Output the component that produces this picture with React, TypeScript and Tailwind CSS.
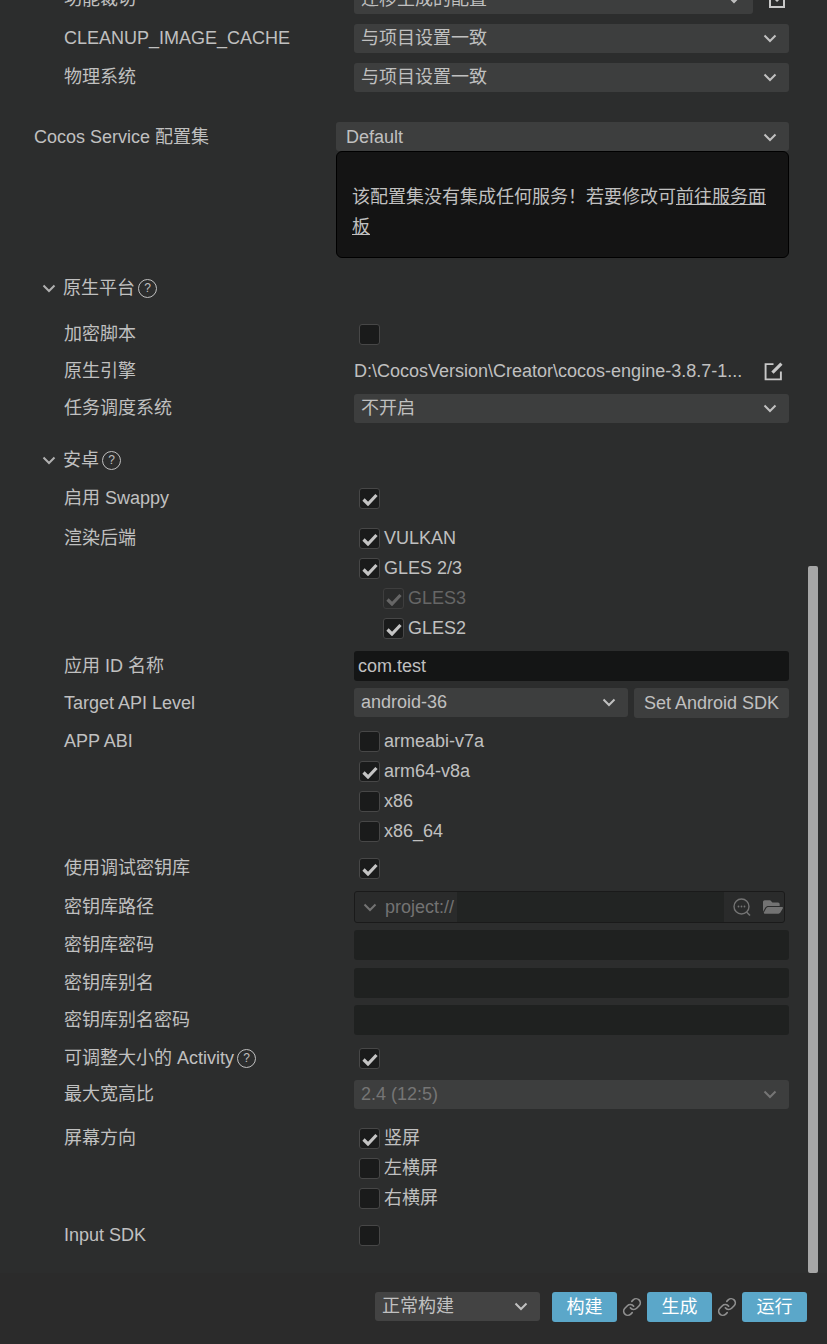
import { FaFolderOpen } from "react-icons/fa";
import { Link } from "lucide-react";
import type { ReactNode } from "react";

function Chevron({ className = "" }: { className?: string }) {
  return (
    <svg width="14" height="9" viewBox="0 0 14 9" fill="none" className={className}>
      <path d="M1.5 1.5L7 7l5.5-5.5" stroke="currentColor" strokeWidth="2" />
    </svg>
  );
}

function Help() {
  return (
    <span className="ml-[3px] flex h-[19px] w-[19px] items-center justify-center rounded-full border border-[#c0c0c0] text-[12px] leading-none">
      ?
    </span>
  );
}

function Check({ checked = false, disabled = false }: { checked?: boolean; disabled?: boolean }) {
  return (
    <span
      className={`flex h-[21px] w-[21px] shrink-0 items-center justify-center rounded-[3px] border bg-[#1a1b1b] ${
        disabled ? "border-[#3e3e3e] bg-[#2a2b2b] text-[#666]" : "border-[#474747] text-[#c4c4c4]"
      }`}
    >
      {checked && (
        <svg width="16" height="14" viewBox="0 0 16 14" fill="none" className="mt-[1px]">
          <path d="M1.5 7.5L6 12l8.5-9" stroke="currentColor" strokeWidth="3.2" />
        </svg>
      )}
    </span>
  );
}

function Select({ value, disabled = false, className = "" }: { value: string; disabled?: boolean; className?: string }) {
  return (
    <div
      className={`flex h-[29px] items-center justify-between rounded-[3px] bg-[#3d3e3e] pr-[12px] ${
        disabled ? "text-[#757575]" : "text-[#c0c0c0]"
      } ${className}`}
    >
      <span className="pl-[7px]">{value}</span>
      <Chevron />
    </div>
  );
}

function Row({ label, mt, children, start = false }: { label: ReactNode; mt: string; children?: ReactNode; start?: boolean }) {
  return (
    <div className={`flex pl-[64px] pr-[38px] ${mt} ${start ? "items-start" : "items-center"}`}>
      <div className={`flex w-[290px] shrink-0 items-center ${start ? "h-[30px]" : ""}`}>{label}</div>
      <div className="min-w-0 flex-1">{children}</div>
    </div>
  );
}

function CheckRow({ label, checked, disabled, indent }: { label: string; checked?: boolean; disabled?: boolean; indent?: boolean }) {
  return (
    <div className={`flex h-[30px] items-center gap-[4px] ${indent ? "pl-[29px]" : "pl-[5px]"} ${disabled ? "text-[#666]" : ""}`}>
      <Check checked={checked} disabled={disabled} />
      <span>{label}</span>
    </div>
  );
}

function Input({ mt, label, value }: { mt: string; label: string; value?: string }) {
  return (
    <Row label={label} mt={mt}>
      <div className={`flex h-[30px] items-center rounded-[3px] pl-[4px] ${value ? "bg-[#141515]" : "bg-[#1f2120]"}`}>{value}</div>
    </Row>
  );
}

function SectionHead({ label, mt }: { label: string; mt: string }) {
  return (
    <div className={`flex h-[30px] items-center pl-[42px] ${mt}`}>
      <Chevron className="mr-[7px] text-[#b0b0b0]" />
      <span>{label}</span>
      <Help />
    </div>
  );
}

function ActionButton({ label }: { label: string }) {
  return (
    <button className="h-[30px] w-[65px] rounded-[3px] bg-[#5ba7c9] text-white">{label}</button>
  );
}

export default function App() {
  return (
    <div
      className="flex h-screen flex-col overflow-hidden bg-[#2c2d2d] text-[18px] text-[#c0c0c0]"
      style={{ fontFamily: '"Liberation Sans", "Noto Sans CJK SC", sans-serif' }}
    >
      <div className="relative flex-1 overflow-hidden">
        <div className="absolute right-[9px] top-[566px] h-[707px] w-[10px] rounded-[2px] bg-[#a6a6a6]" />

        <div className="-mt-[15px] flex items-center pl-[64px] pr-[38px]">
          <div className="w-[290px] shrink-0">功能裁切</div>
          <Select value="迁移生成的配置" className="flex-1" />
          <svg width="18" height="18" viewBox="0 0 18 18" fill="none" className="ml-[15px] mr-[3px] text-[#c8c8c8]">
            <path d="M9 2H2v14h14V9" stroke="currentColor" strokeWidth="2" />
            <path d="M8 10l8-8" stroke="currentColor" strokeWidth="3" />
          </svg>
        </div>
        <Row label="CLEANUP_IMAGE_CACHE" mt="mt-[10px]">
          <Select value="与项目设置一致" />
        </Row>
        <Row label="物理系统" mt="mt-[10px]">
          <Select value="与项目设置一致" />
        </Row>

        <div className="mt-[30px] flex pl-[34px] pr-[38px]">
          <div className="flex h-[29px] w-[302px] shrink-0 items-center pt-[2px]">Cocos Service 配置集</div>
          <div className="min-w-0 flex-1">
            <Select value="Default" className="pt-[1px] [&>span]:pl-[10px]" />
            <div className="flex h-[107px] flex-col justify-center rounded-[6px] border border-black bg-[#141414] px-[15px] pt-[15px] leading-[30px]">
              <p>
                该配置集没有集成任何服务！若要修改可<span className="underline">前往服务面板</span>
              </p>
            </div>
          </div>
        </div>

        <SectionHead label="原生平台" mt="mt-[15px]" />
        <Row label="加密脚本" mt="mt-[16px]">
          <div className="flex h-[30px] items-center pl-[5px]">
            <Check />
          </div>
        </Row>
        <Row label="原生引擎" mt="mt-[7px]">
          <div className="flex h-[30px] items-center justify-between pr-[6px]">
            <span className="truncate">D:\CocosVersion\Creator\cocos-engine-3.8.7-1...</span>
            <svg width="19" height="19" viewBox="0 0 18 18" fill="none" className="ml-[16px] shrink-0 text-[#c8c8c8]">
              <path d="M9 2H1.5v14.5H16V9" stroke="currentColor" strokeWidth="1.8" />
              <path d="M8 10l8.5-8.5" stroke="currentColor" strokeWidth="3" />
            </svg>
          </div>
        </Row>
        <Row label="任务调度系统" mt="mt-[8px]">
          <Select value="不开启" />
        </Row>

        <SectionHead label="安卓" mt="mt-[22px]" />
        <Row label="启用 Swappy" mt="mt-[8px]">
          <div className="flex h-[30px] items-center pl-[5px]">
            <Check checked />
          </div>
        </Row>
        <Row label="渲染后端" mt="mt-[10px]" start>
          <CheckRow label="VULKAN" checked />
          <CheckRow label="GLES 2/3" checked />
          <CheckRow label="GLES3" checked disabled indent />
          <CheckRow label="GLES2" checked indent />
        </Row>
        <Input label="应用 ID 名称" mt="mt-[8px]" value="com.test" />
        <Row label="Target API Level" mt="mt-[7px]">
          <div className="flex gap-[6px]">
            <Select value="android-36" className="w-[274px]" />
            <div className="flex h-[30px] flex-1 items-center justify-center rounded-[3px] bg-[#3d3e3e]">Set Android SDK</div>
          </div>
        </Row>
        <Row label="APP ABI" mt="mt-[8px]" start>
          <CheckRow label="armeabi-v7a" />
          <CheckRow label="arm64-v8a" checked />
          <CheckRow label="x86" />
          <CheckRow label="x86_64" />
        </Row>
        <Row label="使用调试密钥库" mt="mt-[7px]">
          <div className="flex h-[30px] items-center pl-[5px]">
            <Check checked />
          </div>
        </Row>
        <Row label="密钥库路径" mt="mt-[8px]">
          <div className="mr-[4px] flex h-[32px] items-stretch overflow-hidden rounded-[3px] border border-[#1a1a1a] bg-[#2a2b2b] text-[#737373]">
            <div className="flex w-[102px] items-center pl-[8px]">
              <Chevron />
              <span className="ml-[8px]">project://</span>
            </div>
            <div className="flex-1 bg-[#222423]" />
            <div className="flex w-[60px] items-center gap-[11px] pl-[9px]">
              <svg width="19" height="19" viewBox="0 0 19 19" fill="none">
                <circle cx="8.5" cy="8.5" r="7.5" stroke="currentColor" strokeWidth="1.4" />
                <path d="M13.5 14l3.5 3.5" stroke="currentColor" strokeWidth="1.6" />
                <circle cx="5.5" cy="8.5" r="0.9" fill="currentColor" />
                <circle cx="8.5" cy="8.5" r="0.9" fill="currentColor" />
                <circle cx="11.5" cy="8.5" r="0.9" fill="currentColor" />
              </svg>
              <FaFolderOpen size={20} />
            </div>
          </div>
        </Row>
        <Input label="密钥库密码" mt="mt-[7px]" />
        <Input label="密钥库别名" mt="mt-[8px]" />
        <Input label="密钥库别名密码" mt="mt-[7px]" />
        <Row
          label={
            <>
              可调整大小的 Activity
              <Help />
            </>
          }
          mt="mt-[8px]"
        >
          <div className="flex h-[30px] items-center pl-[5px]">
            <Check checked />
          </div>
        </Row>
        <Row label="最大宽高比" mt="mt-[7px]">
          <Select value="2.4 (12:5)" disabled />
        </Row>
        <Row label="屏幕方向" mt="mt-[14px]" start>
          <CheckRow label="竖屏" checked />
          <CheckRow label="左横屏" />
          <CheckRow label="右横屏" />
        </Row>
        <Row label="Input SDK" mt="mt-[7px]">
          <div className="flex h-[30px] items-center pl-[5px]">
            <Check />
          </div>
        </Row>
      </div>

      <div className="flex h-[71px] shrink-0 items-start justify-end bg-[#2b2b2b] pr-[20px] pt-[19px]">
        <Select value="正常构建" className="mr-[12px] w-[165px] bg-[#434343]" />
        <ActionButton label="构建" />
        <Link size={20} className="mx-[5px] mt-[5px] text-[#8f8f8f]" />
        <ActionButton label="生成" />
        <Link size={20} className="mx-[5px] mt-[5px] text-[#8f8f8f]" />
        <ActionButton label="运行" />
      </div>
    </div>
  );
}
